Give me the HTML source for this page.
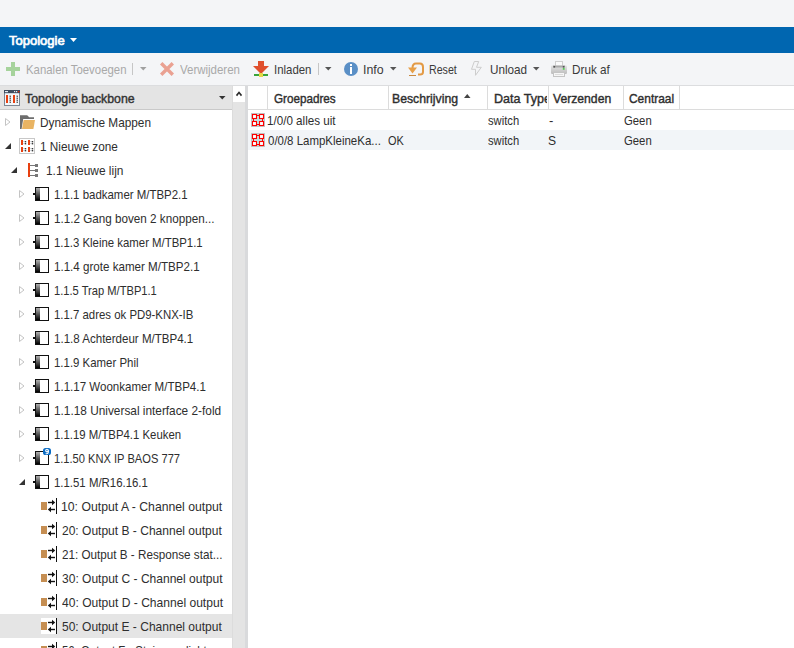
<!DOCTYPE html><html><head><meta charset="utf-8"><style>
html,body{margin:0;padding:0;}
body{width:794px;height:648px;overflow:hidden;position:relative;background:#f4f5f7;font-family:'Liberation Sans', sans-serif;}
.a{position:absolute;}
.t{position:absolute;white-space:pre;line-height:20px;transform-origin:0 0;}
svg{position:absolute;overflow:visible;}
</style></head><body>

<div class="a" style="left:0;top:27px;width:794px;height:26px;background:#0066b0"></div>
<div class="a" style="left:0;top:85px;width:794px;height:1px;background:#dcdddf"></div>
<div class="a" style="left:0;top:86px;width:232px;height:23px;background:#e4e4e4"></div>
<div class="a" style="left:0;top:109px;width:232px;height:1px;background:#c9c9c9"></div>
<div class="a" style="left:0;top:110px;width:232px;height:538px;background:#fff"></div>
<div class="a" style="left:0;top:614px;width:232px;height:24px;background:#e5e5e5"></div>
<div class="a" style="left:232px;top:86px;width:13px;height:562px;background:#e4e4e4"></div>
<div class="a" style="left:232px;top:86px;width:1px;height:562px;background:#dcdcdc"></div>
<div class="a" style="left:233px;top:86px;width:12px;height:16px;background:#fff"></div>
<svg style="left:0;top:0" width="794" height="648"><path d="M235.9 95 L239 91.2 L242.1 95 L240.9 96.2 L239 93.8 L237.1 96.2 Z" fill="#2a2a2a"/></svg>
<div class="a" style="left:245px;top:86px;width:3px;height:562px;background:#d9dadc"></div>
<div class="a" style="left:248px;top:86px;width:546px;height:562px;background:#fff"></div>
<div class="a" style="left:248px;top:109px;width:546px;height:1px;background:#dcdcdc"></div>
<div class="a" style="left:267px;top:86px;width:1px;height:23px;background:#dcdcdc"></div>
<div class="a" style="left:388px;top:86px;width:1px;height:23px;background:#dcdcdc"></div>
<div class="a" style="left:487px;top:86px;width:1px;height:23px;background:#dcdcdc"></div>
<div class="a" style="left:548px;top:86px;width:1px;height:23px;background:#dcdcdc"></div>
<div class="a" style="left:623px;top:86px;width:1px;height:23px;background:#dcdcdc"></div>
<div class="a" style="left:679px;top:86px;width:1px;height:23px;background:#dcdcdc"></div>
<div class="a" style="left:248px;top:130px;width:546px;height:20px;background:#f2f5f8"></div>
<svg style="left:0;top:0" width="794" height="648"><defs><linearGradient id="dg" x1="0" y1="0" x2="0" y2="1"><stop offset="0" stop-color="#b0b0b0"/><stop offset="1" stop-color="#000"/></linearGradient></defs><path d="M70 38 L77 38 L73.5 42 Z" fill="#fff"/><rect x="6" y="67" width="14" height="4" fill="#a6d39c"/><rect x="11" y="62" width="4" height="14" fill="#a6d39c"/><rect x="132" y="63" width="1" height="12" fill="#c6c6c6"/><path d="M140 67 L146.5 67 L143.25 70.5 Z" fill="#a0a0a0"/><path d="M161.2 63.2 L172.8 74.8 M172.8 63.2 L161.2 74.8" stroke="#eaa192" stroke-width="3.4" stroke-linecap="butt"/><path d="M258 61 L264 61 L264 66 L269 66 L261 74 L253 66 L258 66 Z" fill="#e0502e"/><rect x="254" y="74" width="14" height="2" fill="#3aa53a"/><rect x="259" y="73" width="4" height="4" fill="#e6d84a"/><rect x="318" y="63" width="1" height="12" fill="#c6c6c6"/><path d="M325 67 L331.5 67 L328.25 70.5 Z" fill="#555"/><circle cx="351" cy="69" r="7" fill="#5a8fc6"/><rect x="350" y="64" width="2" height="2" fill="#fff"/><rect x="350" y="67" width="2" height="7" fill="#fff"/><path d="M390 67 L396.5 67 L393.25 70.5 Z" fill="#555"/><path d="M412.5 68 C412.5 64.5 414 63.5 416 63.5 L420 63.5 C422 63.5 423 65 423 67 L423 72 C423 74 422 74.5 420 74.5 L418 74.5" fill="none" stroke="#e39a45" stroke-width="2"/><path d="M408 67.5 L417 67.5 L412.5 73.5 Z" fill="#e8a048"/><rect x="409" y="75" width="7" height="1" fill="#c98a40"/><path d="M474.3 61.5 L478.7 61.5 L476.5 67.3 L481.3 67.3 L475.5 75.3 L475.5 69.3 L471.5 69.3 Z" fill="none" stroke="#cdcdcd" stroke-width="1"/><path d="M533 67 L539.5 67 L536.25 70.5 Z" fill="#555"/><defs><linearGradient id="pg" x1="0" y1="0" x2="0" y2="1"><stop offset="0" stop-color="#e2e2e2"/><stop offset="1" stop-color="#bdbdbd"/></linearGradient></defs><rect x="555.5" y="61.5" width="7" height="5" fill="#fbfbfb" stroke="#cfcfcf"/><rect x="551" y="65.5" width="16" height="8.5" rx="1.2" fill="url(#pg)"/><rect x="553" y="65.5" width="12" height="2" fill="#a9a9a9"/><rect x="553.5" y="66" width="1.6" height="1.6" fill="#555"/><rect x="562.8" y="66" width="1.6" height="1.6" fill="#555"/><rect x="553.5" y="72.5" width="11" height="4" fill="#f6f6f6" stroke="#c4c4c4"/><rect x="555" y="74" width="8" height="0.8" fill="#d8d8d8"/><rect x="562.8" y="68" width="1.8" height="1.8" fill="#55cc55"/><rect x="4.5" y="90.5" width="15" height="15" fill="#f4f7fa" stroke="#7d8794"/><rect x="4" y="90" width="16" height="3.2" fill="#3f4d5f"/><rect x="5" y="91" width="3" height="1.2" fill="#e8ecf0"/><rect x="14" y="91" width="1.2" height="1.2" fill="#e8ecf0"/><rect x="16" y="91" width="1.2" height="1.2" fill="#e8ecf0"/><rect x="18" y="91" width="1.3" height="1.3" fill="#e02000"/><rect x="6" y="95" width="2" height="8" fill="#e84010"/><rect x="13" y="95" width="2" height="8" fill="#e84010"/><rect x="9" y="95" width="0.6" height="8" fill="#dde6ee"/><rect x="9.6" y="95.6" width="1.3" height="1.3" fill="#444"/><rect x="9.6" y="97.6" width="1.3" height="1.3" fill="#444"/><rect x="9.6" y="99.6" width="1.3" height="1.3" fill="#444"/><rect x="9.6" y="101.6" width="1.3" height="1.3" fill="#444"/><rect x="16" y="95" width="0.6" height="8" fill="#dde6ee"/><rect x="16.6" y="95.6" width="1.3" height="1.3" fill="#444"/><rect x="16.6" y="97.6" width="1.3" height="1.3" fill="#444"/><rect x="16.6" y="99.6" width="1.3" height="1.3" fill="#444"/><rect x="16.6" y="101.6" width="1.3" height="1.3" fill="#444"/><path d="M219 96 L225.5 96 L222.25 99.5 Z" fill="#333"/><path d="M5.5 118.5 L10 122 L5.5 125.5 Z" fill="none" stroke="#c4c4c4" stroke-width="1"/><path d="M20 115.2 L27.2 115.2 L29.2 117.2 L34 117.2 L34 119 L23.2 119 L21.6 129 L20 129 Z" fill="#6e6e6e"/><path d="M23.6 120 L35 120 L33.4 129 L22 129 Z" fill="#e9b463"/><path d="M11 143 L11 149 L5 149 Z" fill="#333"/><rect x="19.5" y="138.5" width="15" height="15" fill="#fff" stroke="#c8c8c8"/><rect x="21" y="140" width="2" height="5" fill="#e84010"/><rect x="23" y="141.3" width="2" height="0.7" fill="#c5ccd3"/><rect x="23" y="143.3" width="2" height="0.7" fill="#c5ccd3"/><rect x="24.8" y="141" width="1.4" height="1.4" fill="#3a3a3a"/><rect x="24.8" y="143" width="1.4" height="1.4" fill="#3a3a3a"/><rect x="21" y="147" width="2" height="5" fill="#e84010"/><rect x="23" y="148.3" width="2" height="0.7" fill="#c5ccd3"/><rect x="23" y="150.3" width="2" height="0.7" fill="#c5ccd3"/><rect x="24.8" y="148" width="1.4" height="1.4" fill="#3a3a3a"/><rect x="24.8" y="150" width="1.4" height="1.4" fill="#3a3a3a"/><rect x="28" y="140" width="2" height="5" fill="#e84010"/><rect x="30" y="141.3" width="2" height="0.7" fill="#c5ccd3"/><rect x="30" y="143.3" width="2" height="0.7" fill="#c5ccd3"/><rect x="31.8" y="141" width="1.4" height="1.4" fill="#3a3a3a"/><rect x="31.8" y="143" width="1.4" height="1.4" fill="#3a3a3a"/><rect x="28" y="147" width="2" height="5" fill="#e84010"/><rect x="30" y="148.3" width="2" height="0.7" fill="#c5ccd3"/><rect x="30" y="150.3" width="2" height="0.7" fill="#c5ccd3"/><rect x="31.8" y="148" width="1.4" height="1.4" fill="#3a3a3a"/><rect x="31.8" y="150" width="1.4" height="1.4" fill="#3a3a3a"/><path d="M17 167 L17 173 L11 173 Z" fill="#333"/><rect x="28" y="163" width="2" height="14" fill="#e84010"/><rect x="30" y="165" width="5" height="1" fill="#777"/><rect x="35" y="164" width="3" height="3" fill="#777"/><rect x="30" y="170" width="5" height="1" fill="#777"/><rect x="35" y="169" width="3" height="3" fill="#777"/><rect x="30" y="175" width="5" height="1" fill="#777"/><rect x="35" y="174" width="3" height="3" fill="#777"/><path d="M19.5 190.5 L24 194 L19.5 197.5 Z" fill="none" stroke="#c4c4c4" stroke-width="1"/><rect x="33" y="193" width="2" height="2" fill="#111"/><rect x="35.5" y="187.5" width="13" height="13" fill="#fff" stroke="#111"/><rect x="36" y="188" width="4" height="12" fill="url(#dg)"/><path d="M19.5 214.5 L24 218 L19.5 221.5 Z" fill="none" stroke="#c4c4c4" stroke-width="1"/><rect x="33" y="217" width="2" height="2" fill="#111"/><rect x="35.5" y="211.5" width="13" height="13" fill="#fff" stroke="#111"/><rect x="36" y="212" width="4" height="12" fill="url(#dg)"/><path d="M19.5 238.5 L24 242 L19.5 245.5 Z" fill="none" stroke="#c4c4c4" stroke-width="1"/><rect x="33" y="241" width="2" height="2" fill="#111"/><rect x="35.5" y="235.5" width="13" height="13" fill="#fff" stroke="#111"/><rect x="36" y="236" width="4" height="12" fill="url(#dg)"/><path d="M19.5 262.5 L24 266 L19.5 269.5 Z" fill="none" stroke="#c4c4c4" stroke-width="1"/><rect x="33" y="265" width="2" height="2" fill="#111"/><rect x="35.5" y="259.5" width="13" height="13" fill="#fff" stroke="#111"/><rect x="36" y="260" width="4" height="12" fill="url(#dg)"/><path d="M19.5 286.5 L24 290 L19.5 293.5 Z" fill="none" stroke="#c4c4c4" stroke-width="1"/><rect x="33" y="289" width="2" height="2" fill="#111"/><rect x="35.5" y="283.5" width="13" height="13" fill="#fff" stroke="#111"/><rect x="36" y="284" width="4" height="12" fill="url(#dg)"/><path d="M19.5 310.5 L24 314 L19.5 317.5 Z" fill="none" stroke="#c4c4c4" stroke-width="1"/><rect x="33" y="313" width="2" height="2" fill="#111"/><rect x="35.5" y="307.5" width="13" height="13" fill="#fff" stroke="#111"/><rect x="36" y="308" width="4" height="12" fill="url(#dg)"/><path d="M19.5 334.5 L24 338 L19.5 341.5 Z" fill="none" stroke="#c4c4c4" stroke-width="1"/><rect x="33" y="337" width="2" height="2" fill="#111"/><rect x="35.5" y="331.5" width="13" height="13" fill="#fff" stroke="#111"/><rect x="36" y="332" width="4" height="12" fill="url(#dg)"/><path d="M19.5 358.5 L24 362 L19.5 365.5 Z" fill="none" stroke="#c4c4c4" stroke-width="1"/><rect x="33" y="361" width="2" height="2" fill="#111"/><rect x="35.5" y="355.5" width="13" height="13" fill="#fff" stroke="#111"/><rect x="36" y="356" width="4" height="12" fill="url(#dg)"/><path d="M19.5 382.5 L24 386 L19.5 389.5 Z" fill="none" stroke="#c4c4c4" stroke-width="1"/><rect x="33" y="385" width="2" height="2" fill="#111"/><rect x="35.5" y="379.5" width="13" height="13" fill="#fff" stroke="#111"/><rect x="36" y="380" width="4" height="12" fill="url(#dg)"/><path d="M19.5 406.5 L24 410 L19.5 413.5 Z" fill="none" stroke="#c4c4c4" stroke-width="1"/><rect x="33" y="409" width="2" height="2" fill="#111"/><rect x="35.5" y="403.5" width="13" height="13" fill="#fff" stroke="#111"/><rect x="36" y="404" width="4" height="12" fill="url(#dg)"/><path d="M19.5 430.5 L24 434 L19.5 437.5 Z" fill="none" stroke="#c4c4c4" stroke-width="1"/><rect x="33" y="433" width="2" height="2" fill="#111"/><rect x="35.5" y="427.5" width="13" height="13" fill="#fff" stroke="#111"/><rect x="36" y="428" width="4" height="12" fill="url(#dg)"/><path d="M19.5 454.5 L24 458 L19.5 461.5 Z" fill="none" stroke="#c4c4c4" stroke-width="1"/><rect x="33" y="457" width="2" height="2" fill="#111"/><rect x="35.5" y="451.5" width="13" height="13" fill="#fff" stroke="#111"/><rect x="36" y="452" width="4" height="12" fill="url(#dg)"/><rect x="43" y="448" width="8" height="7" rx="2.6" fill="#0a6cc4"/><circle cx="47" cy="450.6" r="1.3" fill="none" stroke="#fff" stroke-width="1.1"/><path d="M48.3 450.6 L48.3 452.2 Q48.3 453.7 46.8 453.7 L45.6 453.7" fill="none" stroke="#fff" stroke-width="1.1"/><path d="M25 479 L25 485 L19 485 Z" fill="#333"/><rect x="33" y="481" width="2" height="2" fill="#111"/><rect x="35.5" y="475.5" width="13" height="13" fill="#fff" stroke="#111"/><rect x="36" y="476" width="4" height="12" fill="url(#dg)"/><rect x="41" y="502" width="6" height="8" fill="#c58e52"/><rect x="48" y="501.8" width="5.5" height="1.4" fill="#111"/><path d="M52 499.8 L55.2 502.5 L52 505.2 Z" fill="#111"/><rect x="50" y="508.8" width="5" height="1.4" fill="#111"/><path d="M51 506.8 L47.8 509.5 L51 512.2 Z" fill="#111"/><rect x="56" y="498" width="1" height="16" fill="#111"/><rect x="41" y="526" width="6" height="8" fill="#c58e52"/><rect x="48" y="525.8" width="5.5" height="1.4" fill="#111"/><path d="M52 523.8 L55.2 526.5 L52 529.2 Z" fill="#111"/><rect x="50" y="532.8" width="5" height="1.4" fill="#111"/><path d="M51 530.8 L47.8 533.5 L51 536.2 Z" fill="#111"/><rect x="56" y="522" width="1" height="16" fill="#111"/><rect x="41" y="550" width="6" height="8" fill="#c58e52"/><rect x="48" y="549.8" width="5.5" height="1.4" fill="#111"/><path d="M52 547.8 L55.2 550.5 L52 553.2 Z" fill="#111"/><rect x="50" y="556.8" width="5" height="1.4" fill="#111"/><path d="M51 554.8 L47.8 557.5 L51 560.2 Z" fill="#111"/><rect x="56" y="546" width="1" height="16" fill="#111"/><rect x="41" y="574" width="6" height="8" fill="#c58e52"/><rect x="48" y="573.8" width="5.5" height="1.4" fill="#111"/><path d="M52 571.8 L55.2 574.5 L52 577.2 Z" fill="#111"/><rect x="50" y="580.8" width="5" height="1.4" fill="#111"/><path d="M51 578.8 L47.8 581.5 L51 584.2 Z" fill="#111"/><rect x="56" y="570" width="1" height="16" fill="#111"/><rect x="41" y="598" width="6" height="8" fill="#c58e52"/><rect x="48" y="597.8" width="5.5" height="1.4" fill="#111"/><path d="M52 595.8 L55.2 598.5 L52 601.2 Z" fill="#111"/><rect x="50" y="604.8" width="5" height="1.4" fill="#111"/><path d="M51 602.8 L47.8 605.5 L51 608.2 Z" fill="#111"/><rect x="56" y="594" width="1" height="16" fill="#111"/><rect x="41" y="618" width="16" height="16" fill="#fff"/><rect x="41" y="622" width="6" height="8" fill="#c58e52"/><rect x="48" y="621.8" width="5.5" height="1.4" fill="#111"/><path d="M52 619.8 L55.2 622.5 L52 625.2 Z" fill="#111"/><rect x="50" y="628.8" width="5" height="1.4" fill="#111"/><path d="M51 626.8 L47.8 629.5 L51 632.2 Z" fill="#111"/><rect x="56" y="618" width="1" height="16" fill="#111"/><rect x="41" y="646" width="6" height="8" fill="#c58e52"/><rect x="48" y="645.8" width="5.5" height="1.4" fill="#111"/><path d="M52 643.8 L55.2 646.5 L52 649.2 Z" fill="#111"/><rect x="50" y="652.8" width="5" height="1.4" fill="#111"/><path d="M51 650.8 L47.8 653.5 L51 656.2 Z" fill="#111"/><rect x="56" y="642" width="1" height="16" fill="#111"/><rect x="251" y="113" width="14" height="14" fill="#c4e2e2"/><rect x="251.5" y="113.5" width="13" height="13" fill="none" stroke="#c2c8c8"/><rect x="257" y="120" width="2" height="0" fill="#bbb"/><rect x="257" y="115" width="2" height="1" fill="#f00"/><rect x="257" y="124" width="2" height="1" fill="#f00"/><rect x="253" y="119" width="1" height="2" fill="#f00"/><rect x="262" y="119" width="1" height="2" fill="#f00"/><rect x="252.5" y="114.5" width="4" height="4" fill="#fff" stroke="#f00" stroke-width="1.1"/><rect x="252.5" y="121.5" width="4" height="4" fill="#fff" stroke="#f00" stroke-width="1.1"/><rect x="259.5" y="114.5" width="4" height="4" fill="#fff" stroke="#f00" stroke-width="1.1"/><rect x="259.5" y="121.5" width="4" height="4" fill="#fff" stroke="#f00" stroke-width="1.1"/><rect x="251" y="133" width="14" height="14" fill="#c4e2e2"/><rect x="251.5" y="133.5" width="13" height="13" fill="none" stroke="#c2c8c8"/><rect x="257" y="140" width="2" height="0" fill="#bbb"/><rect x="257" y="135" width="2" height="1" fill="#f00"/><rect x="257" y="144" width="2" height="1" fill="#f00"/><rect x="253" y="139" width="1" height="2" fill="#f00"/><rect x="262" y="139" width="1" height="2" fill="#f00"/><rect x="252.5" y="134.5" width="4" height="4" fill="#fff" stroke="#f00" stroke-width="1.1"/><rect x="252.5" y="141.5" width="4" height="4" fill="#fff" stroke="#f00" stroke-width="1.1"/><rect x="259.5" y="134.5" width="4" height="4" fill="#fff" stroke="#f00" stroke-width="1.1"/><rect x="259.5" y="141.5" width="4" height="4" fill="#fff" stroke="#f00" stroke-width="1.1"/><path d="M464 98 L470.5 98 L467.25 94 Z" fill="#444"/></svg>
<div class="t" style="left:9.00px;top:31.00px;font:normal 13px 'Liberation Sans', sans-serif;line-height:20px;color:#fff;-webkit-text-stroke:0.7px #fff;transform:scaleX(1.0000)">Topologie</div>
<div class="t" style="left:26.12px;top:60.00px;font:normal 13px 'Liberation Sans', sans-serif;line-height:20px;color:#a9a9a9;transform:scaleX(0.8761)">Kanalen Toevoegen</div>
<div class="t" style="left:180.00px;top:60.00px;font:normal 13px 'Liberation Sans', sans-serif;line-height:20px;color:#a9a9a9;transform:scaleX(0.8824)">Verwijderen</div>
<div class="t" style="left:274.12px;top:60.00px;font:normal 13px 'Liberation Sans', sans-serif;line-height:20px;color:#3a3a3a;transform:scaleX(0.8780)">Inladen</div>
<div class="t" style="left:363.05px;top:60.00px;font:normal 13px 'Liberation Sans', sans-serif;line-height:20px;color:#3a3a3a;transform:scaleX(0.9524)">Info</div>
<div class="t" style="left:429.18px;top:60.00px;font:normal 13px 'Liberation Sans', sans-serif;line-height:20px;color:#3a3a3a;transform:scaleX(0.8182)">Reset</div>
<div class="t" style="left:490.10px;top:60.00px;font:normal 13px 'Liberation Sans', sans-serif;line-height:20px;color:#3a3a3a;transform:scaleX(0.9000)">Unload</div>
<div class="t" style="left:572.10px;top:60.00px;font:normal 13px 'Liberation Sans', sans-serif;line-height:20px;color:#3a3a3a;transform:scaleX(0.9024)">Druk af</div>
<div class="t" style="left:25.00px;top:89.00px;font:normal 13px 'Liberation Sans', sans-serif;line-height:20px;color:#333;-webkit-text-stroke:0.4px #333;transform:scaleX(0.9483)">Topologie backbone</div>
<div class="t" style="left:40.09px;top:113.00px;font:normal 13px 'Liberation Sans', sans-serif;line-height:20px;color:#2e2e2e;transform:scaleX(0.9091)">Dynamische Mappen</div>
<div class="t" style="left:40.09px;top:137.00px;font:normal 13px 'Liberation Sans', sans-serif;line-height:20px;color:#2e2e2e;transform:scaleX(0.9059)">1 Nieuwe zone</div>
<div class="t" style="left:46.08px;top:161.00px;font:normal 13px 'Liberation Sans', sans-serif;line-height:20px;color:#2e2e2e;transform:scaleX(0.9157)">1.1 Nieuwe lijn</div>
<div class="t" style="left:54.12px;top:185.00px;font:normal 13px 'Liberation Sans', sans-serif;line-height:20px;color:#2e2e2e;transform:scaleX(0.8808)">1.1.1 badkamer M/TBP2.1</div>
<div class="t" style="left:54.10px;top:209.00px;font:normal 13px 'Liberation Sans', sans-serif;line-height:20px;color:#2e2e2e;transform:scaleX(0.8983)">1.1.2 Gang boven 2 knoppen...</div>
<div class="t" style="left:54.12px;top:233.00px;font:normal 13px 'Liberation Sans', sans-serif;line-height:20px;color:#2e2e2e;transform:scaleX(0.8757)">1.1.3 Kleine kamer M/TBP1.1</div>
<div class="t" style="left:54.11px;top:257.00px;font:normal 13px 'Liberation Sans', sans-serif;line-height:20px;color:#2e2e2e;transform:scaleX(0.8920)">1.1.4 grote kamer M/TBP2.1</div>
<div class="t" style="left:54.14px;top:281.00px;font:normal 13px 'Liberation Sans', sans-serif;line-height:20px;color:#2e2e2e;transform:scaleX(0.8571)">1.1.5 Trap M/TBP1.1</div>
<div class="t" style="left:54.12px;top:305.00px;font:normal 13px 'Liberation Sans', sans-serif;line-height:20px;color:#2e2e2e;transform:scaleX(0.8766)">1.1.7 adres ok PD9-KNX-IB</div>
<div class="t" style="left:54.11px;top:329.00px;font:normal 13px 'Liberation Sans', sans-serif;line-height:20px;color:#2e2e2e;transform:scaleX(0.8878)">1.1.8 Achterdeur M/TBP4.1</div>
<div class="t" style="left:54.12px;top:353.00px;font:normal 13px 'Liberation Sans', sans-serif;line-height:20px;color:#2e2e2e;transform:scaleX(0.8789)">1.1.9 Kamer Phil</div>
<div class="t" style="left:54.11px;top:377.00px;font:normal 13px 'Liberation Sans', sans-serif;line-height:20px;color:#2e2e2e;transform:scaleX(0.8882)">1.1.17 Woonkamer M/TBP4.1</div>
<div class="t" style="left:54.09px;top:401.00px;font:normal 13px 'Liberation Sans', sans-serif;line-height:20px;color:#2e2e2e;transform:scaleX(0.9104)">1.1.18 Universal interface 2-fold</div>
<div class="t" style="left:54.12px;top:425.00px;font:normal 13px 'Liberation Sans', sans-serif;line-height:20px;color:#2e2e2e;transform:scaleX(0.8750)">1.1.19 M/TBP4.1 Keuken</div>
<div class="t" style="left:54.14px;top:449.00px;font:normal 13px 'Liberation Sans', sans-serif;line-height:20px;color:#2e2e2e;transform:scaleX(0.8562)">1.1.50 KNX IP BAOS 777</div>
<div class="t" style="left:54.12px;top:473.00px;font:normal 13px 'Liberation Sans', sans-serif;line-height:20px;color:#2e2e2e;transform:scaleX(0.8774)">1.1.51 M/R16.16.1</div>
<div class="t" style="left:61.06px;top:497.00px;font:normal 13px 'Liberation Sans', sans-serif;line-height:20px;color:#2e2e2e;transform:scaleX(0.9415)">10: Output A - Channel output</div>
<div class="t" style="left:62.00px;top:521.00px;font:normal 13px 'Liberation Sans', sans-serif;line-height:20px;color:#2e2e2e;transform:scaleX(0.9249)">20: Output B - Channel output</div>
<div class="t" style="left:62.00px;top:545.00px;font:normal 13px 'Liberation Sans', sans-serif;line-height:20px;color:#2e2e2e;transform:scaleX(0.8989)">21: Output B - Response stat...</div>
<div class="t" style="left:62.00px;top:569.00px;font:normal 13px 'Liberation Sans', sans-serif;line-height:20px;color:#2e2e2e;transform:scaleX(0.9253)">30: Output C - Channel output</div>
<div class="t" style="left:62.00px;top:593.00px;font:normal 13px 'Liberation Sans', sans-serif;line-height:20px;color:#2e2e2e;transform:scaleX(0.9282)">40: Output D - Channel output</div>
<div class="t" style="left:62.00px;top:617.00px;font:normal 13px 'Liberation Sans', sans-serif;line-height:20px;color:#2e2e2e;transform:scaleX(0.9249)">50: Output E - Channel output</div>
<div class="t" style="left:62.00px;top:641.00px;font:normal 13px 'Liberation Sans', sans-serif;line-height:20px;color:#2e2e2e;transform:scaleX(0.8750)">56: Output F - Staircase light...</div>
<div class="t" style="left:274.00px;top:89.00px;font:normal 13px 'Liberation Sans', sans-serif;line-height:20px;color:#2e2e2e;-webkit-text-stroke:0.4px #2e2e2e;transform:scaleX(0.8986)">Groepadres</div>
<div class="t" style="left:392.06px;top:89.00px;font:normal 13px 'Liberation Sans', sans-serif;line-height:20px;color:#2e2e2e;-webkit-text-stroke:0.4px #2e2e2e;transform:scaleX(0.9420)">Beschrijving</div>
<div class="a" style="left:494px;top:89px;width:53px;height:20px;overflow:hidden"><div class="t" style="left:0;top:0;font:normal 13px 'Liberation Sans', sans-serif;line-height:20px;color:#2e2e2e;-webkit-text-stroke:0.4px #2e2e2e;transform:scaleX(0.9655)">Data Type</div></div>
<div class="t" style="left:553.00px;top:89.00px;font:normal 13px 'Liberation Sans', sans-serif;line-height:20px;color:#2e2e2e;-webkit-text-stroke:0.4px #2e2e2e;transform:scaleX(0.9355)">Verzenden</div>
<div class="t" style="left:629.00px;top:89.00px;font:normal 13px 'Liberation Sans', sans-serif;line-height:20px;color:#2e2e2e;-webkit-text-stroke:0.4px #2e2e2e;transform:scaleX(0.9184)">Centraal</div>
<div class="t" style="left:267.11px;top:111.00px;font:normal 13px 'Liberation Sans', sans-serif;line-height:20px;color:#2e2e2e;transform:scaleX(0.8947)">1/0/0 alles uit</div>
<div class="t" style="left:488.00px;top:111.00px;font:normal 13px 'Liberation Sans', sans-serif;line-height:20px;color:#2e2e2e;transform:scaleX(0.8611)">switch</div>
<div class="t" style="left:549.00px;top:111.00px;font:normal 13px 'Liberation Sans', sans-serif;line-height:20px;color:#2e2e2e;transform:scaleX(1.0000)">-</div>
<div class="t" style="left:624.00px;top:111.00px;font:normal 13px 'Liberation Sans', sans-serif;line-height:20px;color:#2e2e2e;transform:scaleX(0.8710)">Geen</div>
<div class="t" style="left:268.00px;top:131.00px;font:normal 13px 'Liberation Sans', sans-serif;line-height:20px;color:#2e2e2e;transform:scaleX(0.8819)">0/0/8 LampKleineKa...</div>
<div class="t" style="left:388.00px;top:131.00px;font:normal 13px 'Liberation Sans', sans-serif;line-height:20px;color:#2e2e2e;transform:scaleX(0.8421)">OK</div>
<div class="t" style="left:488.00px;top:131.00px;font:normal 13px 'Liberation Sans', sans-serif;line-height:20px;color:#2e2e2e;transform:scaleX(0.8611)">switch</div>
<div class="t" style="left:547.57px;top:131.00px;font:normal 13px 'Liberation Sans', sans-serif;line-height:20px;color:#2e2e2e;transform:scaleX(0.9286)">S</div>
<div class="t" style="left:624.00px;top:131.00px;font:normal 13px 'Liberation Sans', sans-serif;line-height:20px;color:#2e2e2e;transform:scaleX(0.8710)">Geen</div>
</body></html>
